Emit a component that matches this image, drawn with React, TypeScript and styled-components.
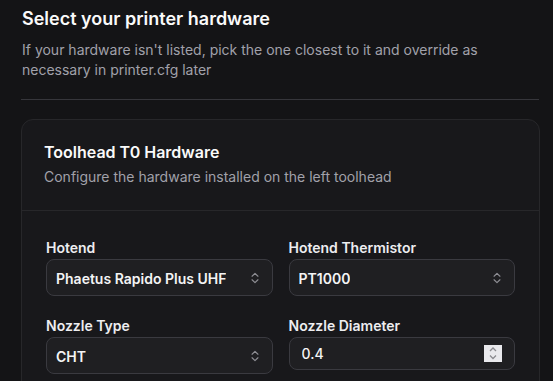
import styled, { createGlobalStyle } from "styled-components";
import { ChevronsUpDown } from "lucide-react";

const GlobalStyle = createGlobalStyle`
  html, body {
    margin: 0;
    padding: 0;
    background: #141416;
  }
  body {
    font-family: Inter, "Noto Sans", sans-serif;
    color: #fafafa;
    -webkit-font-smoothing: antialiased;
  }
`;

type Option = { label: string; value: string };

const hotends: Option[] = [{ label: "Phaetus Rapido Plus UHF", value: "rapido-plus-uhf" }];
const thermistors: Option[] = [{ label: "PT1000", value: "pt1000" }];
const nozzles: Option[] = [{ label: "CHT", value: "cht" }];

const SelectField = ({ label, options }: { label: string; options: Option[] }) => (
  <Field>
    <Label>{label}</Label>
    <SelectBox>
      <SelectValue>{options[0].label}</SelectValue>
      <ChevronsUpDown size={14} strokeWidth={2} color="#8e8e94" />
    </SelectBox>
  </Field>
);

const NumberField = ({ label, value }: { label: string; value: string }) => (
  <Field>
    <Label>{label}</Label>
    <NumberBox>
      <NumberInput type="text" defaultValue={value} />
      <Spinner>
        <svg width="18" height="17" viewBox="0 0 18 17" fill="none">
          <polyline points="6,6 9,3 12,6" stroke="#8b8b90" strokeWidth="1.3" />
          <polyline points="6,10.5 9,13.5 12,10.5" stroke="#8b8b90" strokeWidth="1.3" />
        </svg>
      </Spinner>
    </NumberBox>
  </Field>
);

const App = () => {
  return (
    <>
      <GlobalStyle />
      <Page>
        <Header>
          <Title>Select your printer hardware</Title>
          <Subtitle>
            If your hardware isn't listed, pick the one closest to it and override as necessary in
            printer.cfg later
          </Subtitle>
        </Header>
        <Card>
          <CardHeader>
            <CardTitle>Toolhead T0 Hardware</CardTitle>
            <CardDescription>Configure the hardware installed on the left toolhead</CardDescription>
          </CardHeader>
          <CardContent>
            <SelectField label="Hotend" options={hotends} />
            <SelectField label="Hotend Thermistor" options={thermistors} />
            <SelectField label="Nozzle Type" options={nozzles} />
            <NumberField label="Nozzle Diameter" value="0.4" />
          </CardContent>
        </Card>
      </Page>
    </>
  );
};

export default App;

const Page = styled.div`
  width: 519px;
  padding: 5px 13px 0 21px;
  height: 381px;
  box-sizing: content-box;
  overflow: hidden;
`;

const Header = styled.div`
  padding: 0 1px 19px;
  border-bottom: 1px solid #36363b;
  margin-right: 1px;
`;

const Title = styled.h2`
  margin: 0;
  font-size: 18px;
  line-height: 28px;
  font-weight: 600;
  color: #fafafa;
`;

const Subtitle = styled.p`
  margin: 7px 0 0;
  font-size: 14px;
  line-height: 20px;
  color: #a1a1aa;
`;

const Card = styled.div`
  margin-top: 19px;
  background: #18181b;
  border: 1px solid #27272a;
  border-radius: 12px;
`;

const CardHeader = styled.div`
  padding: 24px 22px 23px;
  border-bottom: 1px solid #27272a;
`;

const CardTitle = styled.h3`
  margin: 0;
  font-size: 16px;
  line-height: 16px;
  font-weight: 600;
  color: #fafafa;
`;

const CardDescription = styled.p`
  margin: 7px 0 0;
  font-size: 14px;
  line-height: 20px;
  color: #a1a1aa;
`;

const CardContent = styled.div`
  display: grid;
  grid-template-columns: minmax(0, 1fr) minmax(0, 1fr);
  column-gap: 16px;
  row-gap: 20px;
  padding: 27px 24px 24px;
  align-items: start;
`;

const Field = styled.div`
  display: flex;
  flex-direction: column;
  gap: 1px;
  min-width: 0;
`;

const Label = styled.label`
  font-size: 14px;
  line-height: 20px;
  font-weight: 600;
  color: #ededf0;
`;

const SelectBox = styled.button`
  display: flex;
  align-items: center;
  justify-content: space-between;
  width: 100%;
  height: 37px;
  padding: 0 10px 0 9px;
  background: #1f1f22;
  border: 1px solid #3a3a40;
  border-radius: 8px;
  font-family: inherit;
  text-align: left;
  cursor: pointer;
`;

const SelectValue = styled.span`
  font-size: 14px;
  font-weight: 600;
  color: #f4f4f5;
  line-height: 20px;
  padding-top: 2px;
  white-space: nowrap;
  overflow: hidden;
  text-overflow: ellipsis;
`;

const NumberBox = styled.div`
  display: flex;
  align-items: center;
  height: 33px;
  padding: 0 12px 0 12px;
  background: #1f1f22;
  border: 1px solid #3a3a40;
  border-radius: 8px;
  box-sizing: border-box;
`;

const NumberInput = styled.input`
  flex: 1;
  min-width: 0;
  background: transparent;
  border: none;
  outline: none;
  padding: 0;
  font-family: inherit;
  font-size: 14px;
  font-weight: 500;
  color: #f4f4f5;
`;

const Spinner = styled.span`
  display: flex;
  width: 18px;
  height: 17px;
  background: #e9e9ed;
`;
